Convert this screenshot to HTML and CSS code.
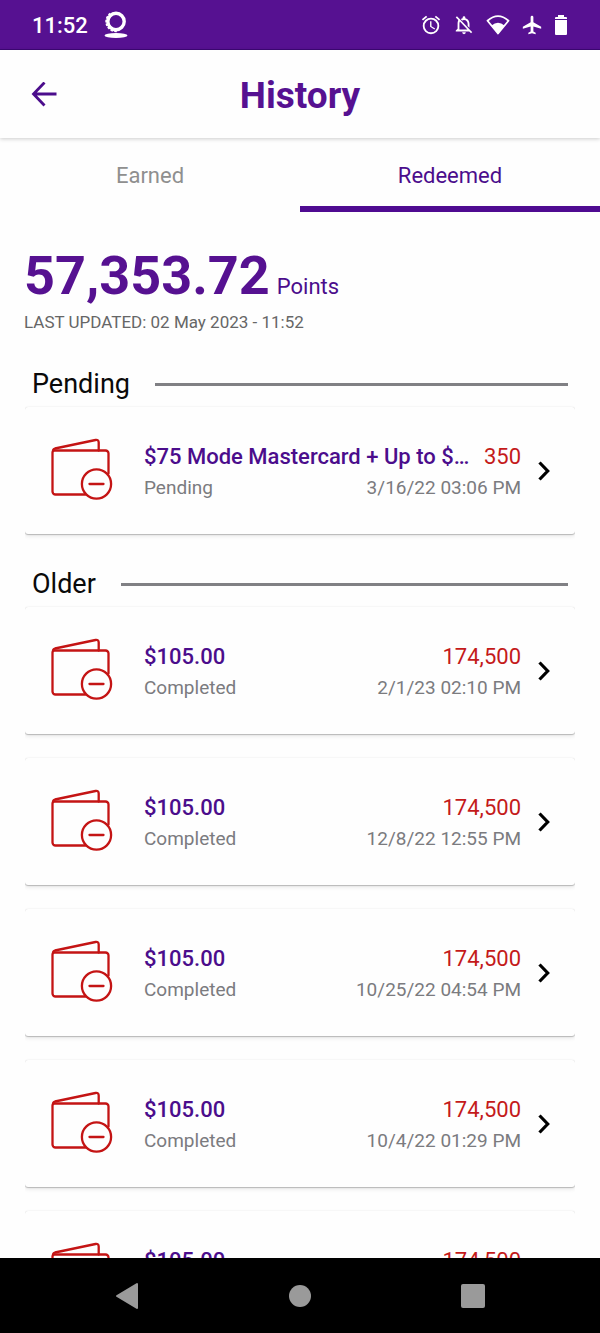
FILE: index.html
```html
<!DOCTYPE html>
<html lang="en">
<head>
<meta charset="utf-8">
<meta name="viewport" content="width=device-width, initial-scale=1">
<title>History</title>
<link rel="stylesheet" href="styles.css">
</head>
<body>
<svg class="defs" aria-hidden="true">
  <symbol id="wallet" viewBox="0 0 62 62">
    <g fill="none" stroke="#c41414" stroke-width="2.3" stroke-linejoin="round" stroke-linecap="round">
      <path d="M34.500 56.500H4.500a3 3 0 0 1-3-3V14.500a2 2 0 0 1 2-2H54.500a3 3 0 0 1 3 3V35.500"/>
      <path d="M2 13Q2 11 4 10.500L44.500 2Q47.700 1.500 47.700 4.500V12.500"/>
      <circle cx="45.500" cy="46" r="14.600"/>
      <path d="M38.500 46H52.500"/>
    </g>
  </symbol>
  <symbol id="chevron" viewBox="0 0 12 20">
    <path d="M1.500 1.500 9.700 10 1.500 18.500" fill="none" stroke="#000" stroke-width="3.200"/>
  </symbol>
</svg>
<div class="screen">
  <div class="status">
    <div class="status-group">
      <span class="clock">11:52</span>
      <svg class="app-icon" width="24" height="28" viewBox="0 0 24 28">
        <circle cx="12" cy="10.500" r="8.200" fill="none" stroke="#fff" stroke-width="3.400"/>
        <path d="M7 3.300A8.800 8.800 0 0 0 13 19.300" fill="none" stroke="#fff" stroke-width="3.800" stroke-dasharray="2.200 1.200"/>
        <ellipse cx="12" cy="24.500" rx="11.500" ry="2.500" fill="#fff"/>
      </svg>
    </div>
    <div class="status-group icons">
      <svg width="22" height="22" viewBox="0 0 24 24" fill="#fff"><path d="M22 5.700l-4.600-3.900-1.300 1.500 4.600 3.900L22 5.700zM7.900 3.400L6.600 1.900 2 5.700l1.300 1.500 4.600-3.800zM12.500 8H11v6l4.700 2.900.8-1.200-4-2.400V8zM12 4a9 9 0 1 0 0 18 9 9 0 0 0 0-18zm0 16a7 7 0 1 1 0-14 7 7 0 0 1 0 14z"/></svg>
      <svg width="22" height="22" viewBox="0 0 24 24" fill="#fff"><path d="M20 18.700 7.800 6.100 4.300 2.500 3 3.800l2.800 2.800v0C5.300 7.600 5 9.200 5 11v5l-2 2v1h14.700l2 2 1.300-1.300-1-1zM12 22a2 2 0 0 0 2-2h-4a2 2 0 0 0 2 2zM7 17v-6c0-1 .1-1.900.5-2.700L15.700 17H7zM12 6.500c2.500 0 4 2 4 4.500v2.100l2 2V11c0-3.100-1.600-5.600-4.500-6.300V4a1.500 1.500 0 0 0-3 0v.7c-.7.200-1.400.5-1.900.9L10 7c.6-.3 1.300-.5 2-.5z"/></svg>
      <svg width="24" height="22" viewBox="0 0 24 22"><path d="M1.500 6.700Q12 -2.500 22.500 6.700L12 19.500Z" fill="none" stroke="#fff" stroke-width="1.800" stroke-linejoin="round"/><path d="M5.500 11.500Q12 6 18.500 11.500L12 20Z" fill="#fff"/></svg>
      <svg width="22" height="22" viewBox="0 0 24 24" fill="#fff"><path d="M22 16v-2l-8.500-5V3.500a1.500 1.500 0 0 0-3 0V9L2 14v2l8.500-2.500V19L8 20.500V22l4-1 4 1v-1.500L13.500 19v-5.500L22 16z"/></svg>
      <svg width="14" height="22" viewBox="0 0 14 22"><path d="M4 1h6v2h2a1 1 0 0 1 1 1v1H1V4a1 1 0 0 1 1-1h2ZM1 6h12v14a1 1 0 0 1-1 1H2a1 1 0 0 1-1-1Z" fill="#fff"/></svg>
    </div>
  </div>

  <header class="header">
    <button class="back" aria-label="Back"><svg width="26" height="26" viewBox="0 0 26 26" fill="none" stroke="#4b0d8c" stroke-width="2.800"><path d="M25.500 12H2.500M13.500 .5 2.500 12 13.500 23.500"/></svg></button>
    <h1 class="title">History</h1>
  </header>

  <main class="main">
    <div class="tabs" role="tablist">
      <button class="tab" role="tab" aria-selected="false">Earned</button>
      <button class="tab active" role="tab" aria-selected="true">Redeemed</button>
    </div>
    <div class="balance">
      <p class="points"><strong class="amount">57,353.72</strong>Points</p>
      <p class="updated">LAST UPDATED: 02 May 2023 - 11:52</p>
    </div>

    <section class="section">
      <h2 class="heading">Pending</h2>
      <div class="list">
        <a class="card" href="#"><svg class="wallet"><use href="#wallet"/></svg><span class="info"><span class="line primary"><span class="name">$75 Mode Mastercard + Up to $…</span><span class="value">350</span></span><span class="line secondary"><span>Pending</span><span>3/16/22 03:06 PM</span></span></span><svg class="chevron"><use href="#chevron"/></svg></a>
      </div>
    </section>

    <section class="section">
      <h2 class="heading">Older</h2>
      <div class="list">
        <a class="card" href="#"><svg class="wallet"><use href="#wallet"/></svg><span class="info"><span class="line primary"><span class="name">$105.00</span><span class="value">174,500</span></span><span class="line secondary"><span>Completed</span><span>2/1/23 02:10 PM</span></span></span><svg class="chevron"><use href="#chevron"/></svg></a>
        <a class="card" href="#"><svg class="wallet"><use href="#wallet"/></svg><span class="info"><span class="line primary"><span class="name">$105.00</span><span class="value">174,500</span></span><span class="line secondary"><span>Completed</span><span>12/8/22 12:55 PM</span></span></span><svg class="chevron"><use href="#chevron"/></svg></a>
        <a class="card" href="#"><svg class="wallet"><use href="#wallet"/></svg><span class="info"><span class="line primary"><span class="name">$105.00</span><span class="value">174,500</span></span><span class="line secondary"><span>Completed</span><span>10/25/22 04:54 PM</span></span></span><svg class="chevron"><use href="#chevron"/></svg></a>
        <a class="card" href="#"><svg class="wallet"><use href="#wallet"/></svg><span class="info"><span class="line primary"><span class="name">$105.00</span><span class="value">174,500</span></span><span class="line secondary"><span>Completed</span><span>10/4/22 01:29 PM</span></span></span><svg class="chevron"><use href="#chevron"/></svg></a>
        <a class="card" href="#"><svg class="wallet"><use href="#wallet"/></svg><span class="info"><span class="line primary"><span class="name">$105.00</span><span class="value">174,500</span></span><span class="line secondary"></span></span><svg class="chevron"><use href="#chevron"/></svg></a>
      </div>
    </section>
  </main>

  <nav class="navbar" aria-label="System">
    <button aria-label="Back"><svg width="26" height="28" viewBox="0 0 26 28"><path d="M23 2v24L3 14Z" fill="#9a9a9a" stroke="#9a9a9a" stroke-width="2" stroke-linejoin="round"/></svg></button>
    <button aria-label="Home"><svg width="26" height="28" viewBox="0 0 26 28"><circle cx="13" cy="14" r="11" fill="#9a9a9a"/></svg></button>
    <button aria-label="Recents"><svg width="26" height="28" viewBox="0 0 26 28"><rect x="1" y="2" width="24" height="24" rx="2" fill="#9a9a9a"/></svg></button>
  </nav>
</div>
</body>
</html>
```
FILE: styles.css
```css
* { box-sizing: border-box; }

body {
  margin: 0;
  font-family: Roboto, sans-serif;
  background: #fefefe;
  color: #4b0d8c;
}

h1, h2, p { margin: 0; }

button {
  border: 0;
  padding: 0;
  background: none;
  font: inherit;
  color: inherit;
}

svg { display: block; flex: none; }

.defs { position: absolute; width: 0; height: 0; }

.screen {
  display: flex;
  flex-direction: column;
  height: 100vh;
}

.status {
  flex: none;
  display: flex;
  align-items: center;
  justify-content: space-between;
  padding: 11px 32px 10px;
  background: #561191;
  border-bottom: 1px solid #3d0875;
  color: #fff;
}

.status-group { display: flex; align-items: center; gap: 16px; }
.icons { gap: 11px; }
.clock { font-size: 22px; line-height: 27px; font-weight: 500; }

.header {
  position: relative;
  flex: none;
  display: grid;
  grid-template-columns: 1fr auto 1fr;
  align-items: center;
  padding: 21px 31px 20px;
  box-shadow: 0 1px 4px rgba(0, 0, 0, 0.2);
}

.title {
  padding-top: 3px;
  font-size: 37px;
  line-height: 44px;
  font-weight: 700;
  color: #561191;
}

.main { flex: 1; min-height: 0; overflow: hidden; }

.tabs { display: grid; grid-template-columns: 1fr 1fr; }

.tab {
  padding: 24px 0 16px;
  border-bottom: 6px solid transparent;
  font-size: 22px;
  line-height: 28px;
  color: #8f8f8f;
}

.tab.active { color: #4b0d8c; border-color: #4f0b91; }

.balance { padding: 37px 24px 24px; }
.points { font-size: 22px; line-height: 24px; }
.amount {
  margin-right: 7px;
  font-size: 54px;
  line-height: 54px;
  font-weight: 700;
  color: #561191;
}
.updated { margin-top: 5px; font-size: 17px; line-height: 28px; color: #666; }

.section { padding: 0 25px 26px; }

.heading {
  display: flex;
  align-items: center;
  gap: 25px;
  padding: 6px 7px 5px;
  font-size: 27px;
  line-height: 36px;
  font-weight: 400;
  color: #0a0a0a;
}

.heading::after { content: ""; flex: 1; height: 3px; background: #808084; }

.list { display: flex; flex-direction: column; gap: 24px; }

.card {
  display: flex;
  align-items: center;
  padding: 31px 25px 31px 26px;
  border-radius: 3px;
  background: #fefefe;
  box-shadow: 0 0 1px rgba(0, 0, 0, 0.16), 0 1px 1px rgba(0, 0, 0, 0.2), 0 2px 4px rgba(0, 0, 0, 0.1);
  clip-path: inset(-2px 0 -6px);
  text-decoration: none;
}

.wallet { align-self: flex-start; width: 62px; height: 62px; }
.chevron { width: 12px; height: 20px; margin-left: 17px; }
.info { flex: 1; min-width: 0; margin-left: 31px; padding-top: 3px; }
.line { display: flex; justify-content: space-between; gap: 12px; min-height: 31px; }
.primary { font-size: 22px; line-height: 31px; }
.secondary { font-size: 19px; line-height: 31px; color: #7b7b7f; }

.name {
  min-width: 0;
  overflow: hidden;
  text-overflow: ellipsis;
  white-space: nowrap;
  font-weight: 500;
  color: #4b0d8c;
}

.value { color: #c41a1a; }

.navbar {
  flex: none;
  display: flex;
  justify-content: center;
  gap: 147px;
  padding: 24px 0 23px;
  background: #000;
}
```
